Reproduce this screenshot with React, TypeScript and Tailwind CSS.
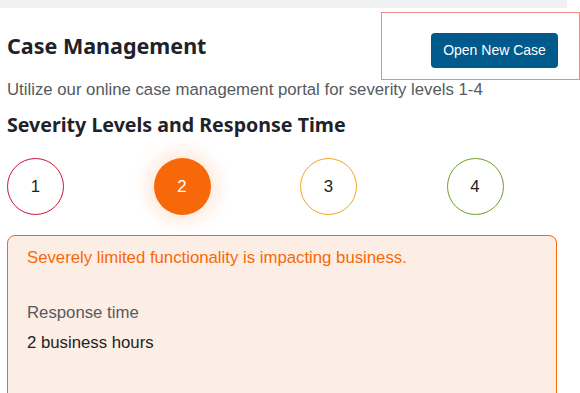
import React from 'react';

const levels = [
    { n: 1, ring: 'border-[#c8193c]', active: false },
    { n: 2, ring: 'border-[#f76808]', active: true },
    { n: 3, ring: 'border-[#f5a41d]', active: false },
    { n: 4, ring: 'border-[#6f9f2a]', active: false },
];

export default function App() {
    return (
        <div className="w-[580px] h-[393px] overflow-hidden bg-white font-['Liberation_Sans',Arial,sans-serif]">
            {/* top strip */}
            <div className="h-[8px] w-[567px] bg-[#eef0f2]" />

            {/* header */}
            <div className="flex justify-between items-start mt-[4px]">
                <h1 className="pl-[7px] pt-[21px] text-[21.5px] leading-[26px] font-bold text-[#1f2229] font-['Noto_Sans',sans-serif]">
                    Case Management
                </h1>
                <div className="w-[199px] h-[68px] border border-[#ec8a8a] flex justify-end items-start pt-[20px] pr-[21px]">
                    <button className="h-[35px] w-[127px] rounded-[4px] bg-[#005a8b] text-white text-[14px]">
                        Open New Case
                    </button>
                </div>
            </div>

            <p className="pl-[7px] text-[16.75px] leading-[20px] text-[#555a60]">
                Utilize our online case management portal for severity levels 1-4
            </p>

            <h2 className="pl-[7px] mt-[14px] text-[19.6px] leading-[22px] font-bold text-[#1f2229] font-['Noto_Sans',sans-serif]">
                Severity Levels and Response Time
            </h2>

            {/* severity selector */}
            <div className="flex gap-[89.5px] pl-[7px] mt-[22px]">
                {levels.map(l => (
                    <div
                        key={l.n}
                        className={`w-[57px] h-[57px] shrink-0 rounded-full flex items-center justify-center text-[16.75px] ${l.active ? 'bg-[#f76808] text-white shadow-[0_0_16px_8px_rgba(247,104,8,0.13)]' : `border ${l.ring} text-[#222]`}`}
                    >
                        {l.n}
                    </div>
                ))}
            </div>

            {/* detail card */}
            <div className="ml-[7px] mt-[20px] w-[550px] h-[200px] rounded-[8px] border border-[#f76808] bg-[#fdeee5] px-[19px] pt-[12px]">
                <p className="text-[16.75px] leading-[20px] text-[#f76808]">
                    Severely limited functionality is impacting business.
                </p>
                <p className="mt-[35px] text-[16.75px] leading-[20px] text-[#555a60]">Response time</p>
                <p className="mt-[10px] text-[16.75px] leading-[20px] text-[#222]">2 business hours</p>
            </div>
        </div>
    );
}
